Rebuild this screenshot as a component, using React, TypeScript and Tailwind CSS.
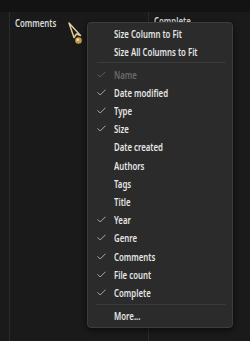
import React from 'react'

const items: { label: string; checked?: boolean; disabled?: boolean }[] = [
  { label: 'Name', checked: true, disabled: true },
  { label: 'Date modified', checked: true },
  { label: 'Type', checked: true },
  { label: 'Size', checked: true },
  { label: 'Date created' },
  { label: 'Authors' },
  { label: 'Tags' },
  { label: 'Title' },
  { label: 'Year', checked: true },
  { label: 'Genre', checked: true },
  { label: 'Comments', checked: true },
  { label: 'File count', checked: true },
  { label: 'Complete', checked: true },
]

// the source font is a narrow semibold face, so the text is squeezed horizontally
const txt = 'inline-block origin-left scale-x-[0.71] whitespace-nowrap'

function Check({ muted }: { muted?: boolean }) {
  return (
    <svg width="9" height="7" viewBox="0 0 9 7" fill="none" stroke={muted ? '#5e5e5e' : '#a8a8a8'} strokeWidth="1" strokeLinecap="round" strokeLinejoin="round">
      <path d="M0.8 3.6 L3.2 6 L8.2 1" />
    </svg>
  )
}

function Row({ label, checked, disabled }: { label: string; checked?: boolean; disabled?: boolean }) {
  return (
    <div className="flex items-center h-[18.2px]">
      <div className="w-[26px] pl-[9px] flex items-center">{checked && <Check muted={disabled} />}</div>
      <span className={`${txt} ${disabled ? 'text-[#6b6b6b]' : 'text-[#e6e6e6]'}`}>{label}</span>
    </div>
  )
}

export default function App() {
  return (
    <div className="relative w-[250px] h-[341px] overflow-hidden bg-[#1a1a1a] font-['Noto_Sans',sans-serif] text-[11px] font-semibold leading-none">
      <div className="h-[12px] bg-[#131313]" />
      <div className="flex h-[329px]">
        <div className="w-[9px]" />
        <div className="w-[139px] border-l border-[#2a2a33] pl-[5px] pt-[5px] text-[#dcdcdc]">
          <span className={txt}>Comments</span>
        </div>
        <div className="flex-1 border-l border-[#2a2a33] pl-[5px] pt-[3px] text-[#dcdcdc]">
          <span className={txt}>Complete</span>
        </div>
      </div>

      <svg className="absolute left-[67px] top-[21px]" width="18" height="25" viewBox="0 0 18 25" fill="none">
        <path d="M2 2 L7 16.5 L9.5 13 L13.5 14.5 Z" fill="#1d1912" stroke="#dccca0" strokeWidth="1.5" strokeLinejoin="round" />
        <circle cx="11.5" cy="19.5" r="3.3" fill="#c49c48" />
        <circle cx="10.8" cy="18.7" r="1.3" fill="#f2dd9c" />
      </svg>

      <div className="absolute left-[87px] top-[22px] w-[146px] h-[306px] rounded-[4px] border border-[#3d3d3d] bg-[#2b2b2b] shadow-[0_2px_6px_rgba(0,0,0,0.6)] pt-[1px]">
        <div className="flex items-center h-[18.2px] pl-[26px] text-[#e6e6e6]">
          <span className={txt}>Size Column to Fit</span>
        </div>
        <div className="flex items-center h-[18.2px] pl-[26px] text-[#e6e6e6]">
          <span className={txt}>Size All Columns to Fit</span>
        </div>
        <div className="h-[4.7px] flex items-center pl-[9px] pr-[6px]">
          <div className="h-px w-full bg-[#3a3a3a]" />
        </div>
        {items.map(it => (
          <Row key={it.label} {...it} />
        ))}
        <div className="h-[5.4px] flex items-center pl-[8px] pr-[6px]">
          <div className="h-px w-full bg-[#3a3a3a]" />
        </div>
        <div className="flex items-center h-[18.2px] pl-[26px] text-[#e6e6e6]">
          <span className={txt}>More...</span>
        </div>
      </div>
    </div>
  )
}
